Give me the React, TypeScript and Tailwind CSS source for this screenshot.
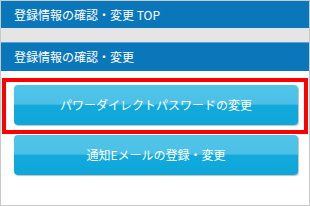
const jp = { fontFamily: '"Noto Sans CJK JP", "Noto Sans", sans-serif' };

const MenuButton = ({ label }: { label: string }) => (
    <button
        className="relative w-full h-[40px] rounded-[4px] overflow-hidden shadow-[1px_1px_1px_rgba(0,0,0,0.25)] text-white text-[12px] bg-[linear-gradient(to_bottom,#52c4e8_0%,#4bc0e6_48%,#12a9dd_50%,#0fa6da_100%)]"
        style={jp}
    >
        {label}
    </button>
);

const App = () => {
    return (
        <div className="relative w-[310px] h-[206px] border border-[#c9c9c9] bg-white overflow-hidden" style={jp}>
            {/* Header */}
            <div className="h-[27px] bg-[#0b77bb] text-white text-[12px] leading-[27px] pl-[13px]">
                登録情報の確認・変更 TOP
            </div>
            <div className="h-[14px] bg-[#e5e5e5]" />
            <div className="h-[29px] bg-[#0b77bb] border-t border-[#5aa3d4] text-white text-[12px] leading-[27px] pl-[13px]">
                登録情報の確認・変更
            </div>

            {/* Menu */}
            <div className="flex flex-col gap-[10px] pl-[13px] pr-[11px] pt-[14px]">
                <MenuButton label="パワーダイレクトパスワードの変更" />
                <MenuButton label="通知Eメールの登録・変更" />
            </div>

            {/* Highlight */}
            <div className="absolute left-[1px] top-[77px] w-[306px] h-[56px] border-[4px] border-[#ff0000] pointer-events-none" />
        </div>
    );
};

export default App;
